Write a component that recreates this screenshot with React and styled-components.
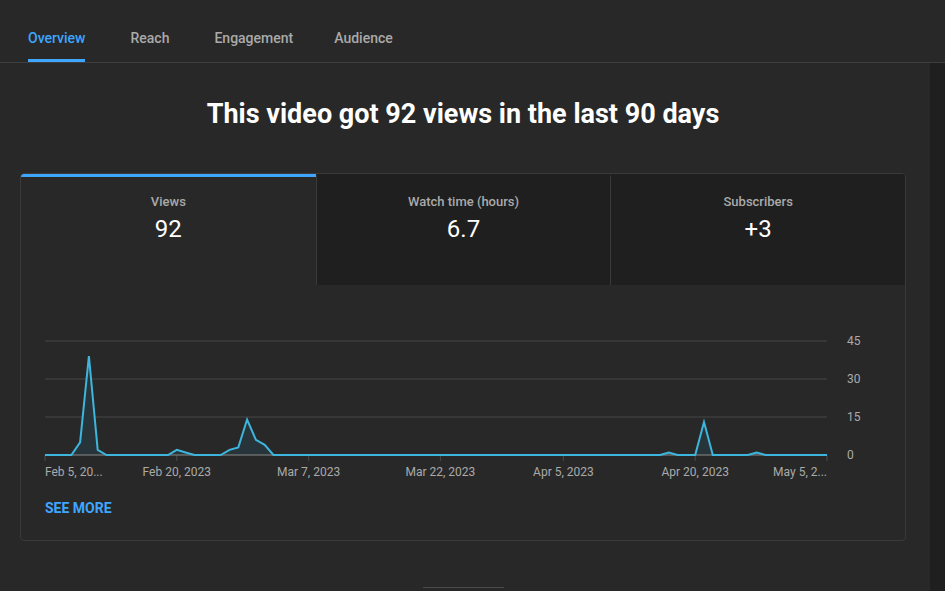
import styled, { createGlobalStyle } from 'styled-components'

const GlobalStyle = createGlobalStyle`
    html, body {
        margin: 0;
        padding: 0;
        background: #282828;
        font-family: Roboto, "Liberation Sans", sans-serif;
        overflow: hidden;
    }
`

const Page = styled.div`
    display: flex;
    flex-direction: column;
    height: 591px;
    background: #282828;
`

const TabBar = styled.nav`
    display: flex;
    gap: 45px;
    height: 62px;
    padding-left: 28px;
    border-bottom: 1px solid #3e3e3e;
    flex-shrink: 0;
`

const Tab = styled.div`
    box-sizing: border-box;
    height: 62px;
    padding-top: 29px;
    font-size: 14px;
    line-height: 18px;
    font-weight: 500;
    color: ${p => (p.$active ? '#3ea6ff' : '#aaaaaa')};
    border-bottom: 3px solid ${p => (p.$active ? '#3ea6ff' : 'transparent')};
    border-radius: 2px 2px 0 0;
    &:last-child {
        margin-left: -4px;
    }
`

const Body = styled.div`
    display: flex;
    flex: 1;
    min-height: 0;
`

const Content = styled.main`
    flex: 1;
    display: flex;
    flex-direction: column;
    padding: 32px 24px 0 20px;
`

const Scrollbar = styled.div`
    width: 15px;
    background: #1f1f1f;
`

const Headline = styled.h1`
    margin: 0;
    text-align: center;
    font-size: 27px;
    line-height: 38px;
    font-weight: 700;
    color: #ffffff;
`

const Card = styled.section`
    margin-top: 40px;
    border: 1px solid #3a3a3a;
    border-radius: 4px;
    overflow: hidden;
`

const MetricRow = styled.div`
    display: grid;
    grid-template-columns: repeat(3, 1fr);
    height: 111px;
`

const Metric = styled.div`
    display: flex;
    flex-direction: column;
    align-items: center;
    padding-top: 17px;
    background: ${p => (p.$active ? '#282828' : '#1f1f1f')};
    border-top: 3px solid ${p => (p.$active ? '#3ea6ff' : '#1f1f1f')};
    & + & {
        border-left: 1px solid #3a3a3a;
    }
`

const MetricLabel = styled.div`
    font-size: 13px;
    line-height: 16px;
    font-weight: 500;
    color: #aaaaaa;
`

const MetricValue = styled.div`
    margin-top: 4px;
    font-size: 24px;
    line-height: 30px;
    color: #ffffff;
`

const ChartWrap = styled.div`
    padding-top: 15px;
    svg {
        display: block;
    }
`

const SeeMore = styled.a`
    display: block;
    margin: 15px 0 23px 24px;
    font-size: 14px;
    line-height: 17px;
    font-weight: 700;
    color: #3ea6ff;
    text-decoration: none;
`

const Divider = styled.div`
    align-self: center;
    width: 81px;
    height: 1px;
    margin-top: 46px;
    background: #4a4a4a;
`

// daily views, Feb 5 -> May 5
const views = Array(90).fill(0)
Object.entries({ 4: 5, 5: 39, 6: 2, 15: 2, 16: 1, 21: 2, 22: 3, 23: 14, 24: 6, 25: 4, 71: 1, 75: 13, 81: 1 })
    .forEach(([d, v]) => { views[d] = v })

const X0 = 24
const X1 = 806
const BASE = 155
const PER = 38 / 15
const xAt = i => X0 + (i * (X1 - X0)) / 89
const yAt = v => BASE - v * PER

const ticks = [
    { day: 0, label: 'Feb 5, 20...', anchor: 'start' },
    { day: 15, label: 'Feb 20, 2023' },
    { day: 30, label: 'Mar 7, 2023' },
    { day: 45, label: 'Mar 22, 2023' },
    { day: 59, label: 'Apr 5, 2023' },
    { day: 74, label: 'Apr 20, 2023' },
    { day: 89, label: 'May 5, 2...', anchor: 'end' },
]

function Chart() {
    const pts = views.map((v, i) => `${xAt(i).toFixed(1)},${yAt(v).toFixed(1)}`).join(' ')
    const area = `${X0},${BASE} ${pts} ${X1},${BASE}`
    return (
        <svg width="884" height="185" viewBox="0 0 884 185">
            {[45, 30, 15].map(v => (
                <line key={v} x1={X0} x2={X1} y1={yAt(v)} y2={yAt(v)} stroke="#373737" strokeWidth="2" />
            ))}
            {[45, 30, 15, 0].map(v => (
                <text key={v} x="826" y={yAt(v) + 4} fontSize="12" fill="#aaaaaa" fontFamily="Roboto, sans-serif">{v}</text>
            ))}
            {ticks.map(t => (
                <line key={t.day} x1={xAt(t.day)} x2={xAt(t.day)} y1={BASE} y2={BASE + 6} stroke="#4a4a4a" strokeWidth="1" />
            ))}
            <polygon points={area} fill="#27353b" />
            <line x1={X0} x2={X1} y1={BASE} y2={BASE} stroke="#8a8a8a" strokeWidth="1" />
            <polyline points={pts} fill="none" stroke="#3eb5dc" strokeWidth="2" strokeLinejoin="miter" />
            {ticks.map(t => (
                <text key={t.label} x={xAt(t.day)} y="176" fontSize="12" fill="#aaaaaa" textAnchor={t.anchor || 'middle'} fontFamily="Roboto, sans-serif">{t.label}</text>
            ))}
        </svg>
    )
}

const metrics = [
    { label: 'Views', value: '92', active: true },
    { label: 'Watch time (hours)', value: '6.7' },
    { label: 'Subscribers', value: '+3' },
]

function App() {
    return (
        <Page>
            <GlobalStyle />
            <TabBar>
                <Tab $active>Overview</Tab>
                <Tab>Reach</Tab>
                <Tab>Engagement</Tab>
                <Tab>Audience</Tab>
            </TabBar>
            <Body>
                <Content>
                    <Headline>This video got 92 views in the last 90 days</Headline>
                    <Card>
                        <MetricRow>
                            {metrics.map(m => (
                                <Metric key={m.label} $active={m.active}>
                                    <MetricLabel>{m.label}</MetricLabel>
                                    <MetricValue>{m.value}</MetricValue>
                                </Metric>
                            ))}
                        </MetricRow>
                        <ChartWrap>
                            <Chart />
                        </ChartWrap>
                        <SeeMore href="#">SEE MORE</SeeMore>
                    </Card>
                    <Divider />
                </Content>
                <Scrollbar />
            </Body>
        </Page>
    )
}

export default App
